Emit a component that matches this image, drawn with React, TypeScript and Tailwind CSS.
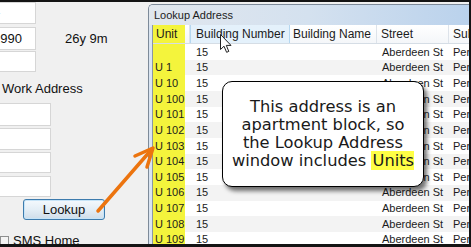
const rows = ['', 'U 1', 'U 10', 'U 100', 'U 101', 'U 102', 'U 103', 'U 104', 'U 105', 'U 106', 'U 107', 'U 108', 'U 109'];

function Field({ w = 'w-[36px]', h = 'h-[22px]', mt = 'mt-0', children }: { w?: string; h?: string; mt?: string; children?: React.ReactNode }) {
    return (
        <div className={`${w} ${h} ${mt} shrink-0 bg-white border border-l-0 border-[#d6d6d6] flex items-center overflow-hidden`}>
            {children}
        </div>
    );
}

function LeftPanel() {
    return (
        <div
            className="w-[148px] shrink-0 flex flex-col overflow-hidden text-[13px] text-[#111]"
            style={{ fontFamily: '"Liberation Sans", Arial, sans-serif' }}
        >
            <Field>
                <span className="ml-[-4px] text-[#222]">-</span>
            </Field>
            <div className="flex shrink-0 items-center mt-[3px]">
                <Field h="h-[23px]">
                    <span className="ml-[-7px] leading-none">1990</span>
                </Field>
                <span className="ml-[29px]">26y 9m</span>
            </div>
            <Field h="h-[21px]" mt="mt-[1px]" />
            <div className="mt-[9px] h-[15px] shrink-0 leading-[15px] pl-[2px]">Work Address</div>
            <Field w="w-[51px]" h="h-[23px]" mt="mt-[7px]" />
            <Field w="w-[51px]" mt="mt-[2px]" />
            <Field w="w-[51px]" h="h-[21px]" mt="mt-[2px]" />
            <Field w="w-[51px]" h="h-[21px]" mt="mt-[3px]" />
            <button className="mt-[2px] ml-[23px] w-[82px] h-[21px] shrink-0 rounded-[3px] border border-[#3d7bad] bg-gradient-to-b from-[#f4f9fd] via-[#e4eef6] to-[#cfdde9] shadow-[inset_0_0_0_1px_#c6e4f8] text-[13px] text-[#111] leading-none">
                Lookup
            </button>
            <div className="mt-[13px] shrink-0 flex items-center gap-[4px]">
                <div className="w-[9px] h-[9px] border border-[#8e8f8f] bg-[#f4f4f4]" />
                <span className="leading-[15px]">SMS Home</span>
            </div>
        </div>
    );
}

function LookupWindow() {
    return (
        <div className="flex-1 mt-[2px] flex flex-col border-l border-t border-[#7d8a99] rounded-tl-[5px] bg-[#d9e4f1] overflow-hidden">
            <div
                className="h-[20px] shrink-0 flex items-center pl-[5px] text-[11px] text-[#1c1c1c] bg-gradient-to-r from-[#e1e7ee] via-[#d4e1ef] to-[#bad2ec] whitespace-nowrap"
                style={{ fontFamily: '"Liberation Sans", Arial, sans-serif' }}
            >
                Lookup Address
            </div>
            <div
                className="flex-1 ml-[3px] border-l border-[#8a96a4] bg-white flex flex-col text-[#1b1b1b] whitespace-nowrap"
                style={{ fontFamily: '"Liberation Sans", Arial, sans-serif' }}
            >
                <div className="h-[19px] shrink-0 flex text-[12px] border-b border-[#d5dde5] bg-gradient-to-b from-white to-[#f4f6f9]">
                    <div className="w-[37px] shrink-0 flex">
                        <div className="w-[32px] bg-[#f4f43c] pl-[3px] flex items-center">Unit</div>
                        <div className="flex-1 border-r border-[#dde3ea]" />
                    </div>
                    <div className="w-[100px] shrink-0 pl-[5px] flex items-center bg-[#e4f1fb] border-x border-[#b5d7f0] overflow-hidden">Building Number</div>
                    <div className="w-[87px] shrink-0 pl-[3px] flex items-center border-r border-[#dde3ea] overflow-hidden">Building Name</div>
                    <div className="w-[72px] shrink-0 pl-[4px] flex items-center border-r border-[#dde3ea]">Street</div>
                    <div className="flex-1 pl-[4px] flex items-center">Suburb</div>
                </div>
                {rows.map((u, i) => (
                    <div
                        key={i}
                        className={`h-[15.67px] shrink-0 flex text-[11px] ${i % 2 === 1 ? 'bg-[#f3f3f3]' : 'bg-white'}`}
                    >
                        <div className="w-[37px] shrink-0 flex">
                            <div className="w-[32px] bg-[#f4f43c] pl-[2px] flex items-center">{u}</div>
                        </div>
                        <div className="w-[100px] shrink-0 pl-[6px] flex items-center">15</div>
                        <div className="w-[87px] shrink-0" />
                        <div className="w-[72px] shrink-0 pl-[5px] flex items-center">Aberdeen St</div>
                        <div className="flex-1 pl-[4px] flex items-center">Perth</div>
                    </div>
                ))}
            </div>
        </div>
    );
}

export default function App() {
    return (
        <div className="w-[471px] h-[247px] relative overflow-hidden flex bg-[#f0f0f0] border-t-2 border-r-2 border-b-[3px] border-[#141414]">
            <LeftPanel />
            <LookupWindow />

            <svg className="absolute left-0 top-0 pointer-events-none" width="471" height="247">
                <line x1="98" y1="209" x2="152" y2="147" stroke="#ec740f" strokeWidth="3.5" strokeLinecap="round" />
                <polyline
                    points="135,154 153,146 147,165"
                    fill="none"
                    stroke="#ec740f"
                    strokeWidth="3.5"
                    strokeLinecap="round"
                    strokeLinejoin="round"
                />
            </svg>

            <svg className="absolute left-[220px] top-[32px] pointer-events-none" width="13" height="20" viewBox="0 0 13 20">
                <path d="M0.5 0.5 L0.5 15.5 L4 12.2 L6.6 18.3 L8.8 17.4 L6.3 11.4 L11 11.4 Z" fill="#fff" stroke="#222" strokeWidth="1" strokeLinejoin="round" />
            </svg>

            <div
                className="absolute left-[222px] top-[79px] w-[202px] h-[106px] rounded-[10px] border border-black bg-white shadow-[3px_4px_4px_rgba(0,0,0,0.55)] flex items-center justify-center text-center text-[16.3px] leading-[18px] text-[#1a1a1a]"
                style={{ fontFamily: '"DejaVu Sans", Verdana, sans-serif' }}
            >
                <p>
                    This address is an
                    <br />
                    apartment block, so
                    <br />
                    the Lookup Address
                    <br />
                    window includes <span className="bg-[#ffff45] pl-[1px]">Units</span>
                </p>
            </div>
        </div>
    );
}
